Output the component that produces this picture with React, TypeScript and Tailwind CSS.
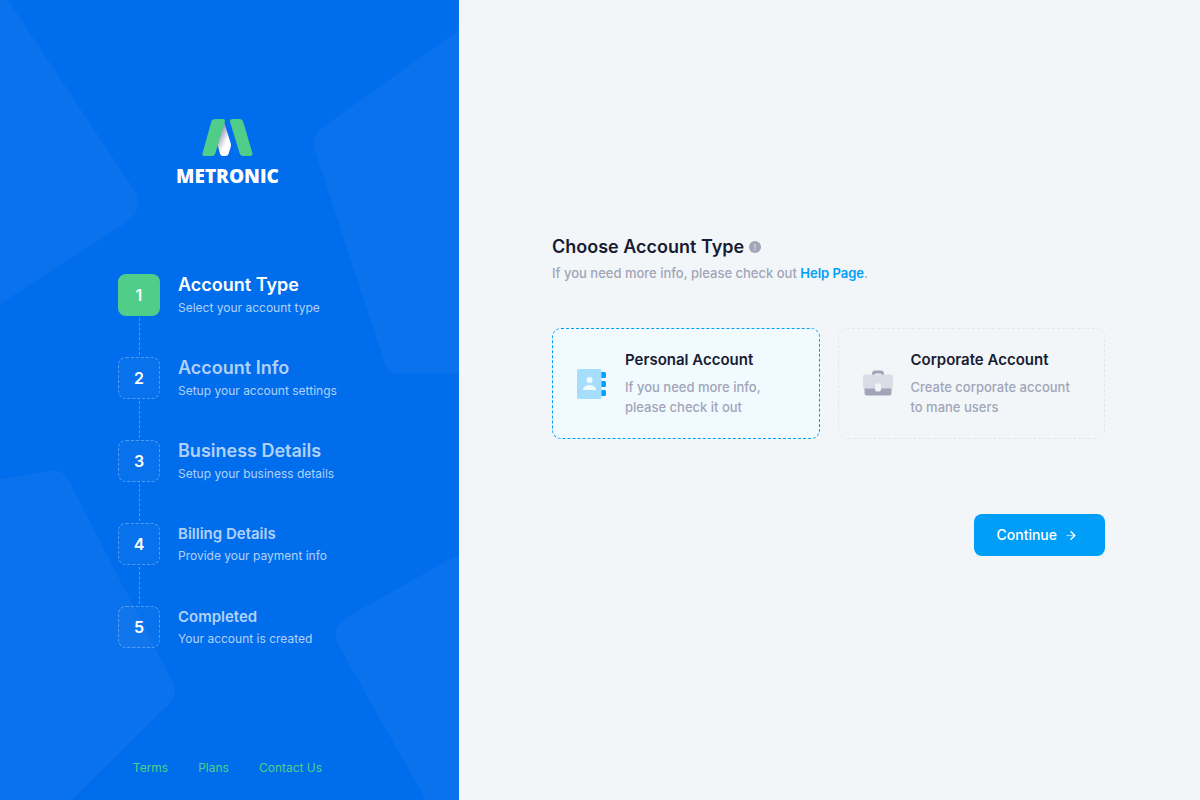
import { useState } from "react";

type Step = { title: string; text: string; large: boolean };

const steps: Step[] = [
  { title: "Account Type", text: "Select your account type", large: true },
  { title: "Account Info", text: "Setup your account settings", large: true },
  { title: "Business Details", text: "Setup your business details", large: true },
  { title: "Billing Details", text: "Provide your payment info", large: false },
  { title: "Completed", text: "Your account is created", large: false },
];

function Backdrop() {
  return (
    <svg
      className="absolute inset-0 h-full w-full"
      viewBox="0 0 459 800"
      preserveAspectRatio="xMidYMid slice"
      fill="#fff"
      fillOpacity="0.04"
      aria-hidden="true"
    >
      <path d="M0 0H8L131 185C141 200 141 212 127 222L0 304Z" />
      <path d="M459 30L323 127C314 134 312 143 315 151L384 361C387 370 391 374 400 374H459Z" />
      <path d="M0 479L50 471C58 469 64 472 69 481L172 681C177 690 175 698 168 705L72 800H0Z" />
      <path d="M459 554L349 616C336 623 333 634 339 646L426 800H459Z" />
    </svg>
  );
}

function Logo() {
  return (
    <a href="#" className="flex flex-col items-center gap-2">
      <svg width="51" height="37" viewBox="0 0 51 37" aria-hidden="true">
        <defs>
          <linearGradient id="fold" x1="16" y1="16" x2="26" y2="21" gradientUnits="userSpaceOnUse">
            <stop offset="0.1" stopColor="#a0a0b8" />
            <stop offset="0.95" stopColor="#fff" />
          </linearGradient>
        </defs>
        <path d="M22 3L28.8 24.5Q29.3 26.3 28.7 28L26.6 34.8Q25.900 37 23.600 37H20.800Q18.600 37 18 34.800L15.600 26Z" fill="url(#fold)" />
        <path d="M13.200 0H20.600Q23.600 0 22.800 3L13.400 34.200Q12.500 37 9.600 37H2.400Q-.3 37 .5 34.200L9.200 3Q10.100 0 13.200 0Z" fill="#50cd89" />
        <path d="M30.400 0H37.500Q40.400 0 41.300 3L50.400 34.200Q51.200 37 48.300 37H41.400Q38.500 37 37.600 34.200L28.100 3Q27.300 0 30.400 0Z" fill="#50cd89" />
      </svg>
      <span className="font-['Open_Sans',sans-serif] text-[19px] leading-6 font-extrabold text-white">METRONIC</span>
    </a>
  );
}

function AddressBookIcon() {
  return (
    <svg width="30" height="30" viewBox="0 0 30 30" aria-hidden="true">
      <path d="M24 3h3.500q1.500 0 1.500 1.500v3q0 1.500-1.500 1.500H24zM24 12h3.500q1.500 0 1.500 1.500v3q0 1.500-1.500 1.500H24zM24 21h3.500q1.500 0 1.500 1.500v3q0 1.500-1.500 1.500H24z" fill="#009ef7" />
      <rect width="24.500" height="30" rx="1.500" fill="#a6dcfc" />
      <circle cx="12.500" cy="11" r="3" fill="#f1faff" />
      <path d="M6 20.500C6.500 17.500 9 16 12.500 16s6 1.500 6.500 4.500q0 .5-.5.5h-12q-.5 0-.5-.5z" fill="#f1faff" />
    </svg>
  );
}

function BriefcaseIcon() {
  return (
    <svg width="30" height="30" viewBox="0 0 30 30" aria-hidden="true">
      <path d="M9 7V5q0-3.500 3-3.500h6q3 0 3 3.500v2h-3V5q0-.5-.5-.5h-5q-.5 0-.5.500V7z" fill="#a1a5b7" />
      <path d="M1.500 18h27v6q0 2.500-2.500 2.500H4q-2.500 0-2.500-2.500z" fill="#a1a5b7" />
      <path d="M1.500 5.500h27Q30 5.500 30 7V16.500q0 3-3 3H3q-3 0-3-3V7Q0 5.500 1.500 5.500z" fill="#dbdde6" />
      <rect x="12" y="14.500" width="6" height="8" rx="2" fill="#f1f4f8" />
    </svg>
  );
}

const accounts = [
  { id: "personal", title: "Personal Account", lines: ["If you need more info,", "please check it out"], icon: <AddressBookIcon /> },
  { id: "corporate", title: "Corporate Account", lines: ["Create corporate account", "to mane users"], icon: <BriefcaseIcon /> },
];

export default function App() {
  const [account, setAccount] = useState("personal");

  return (
    <div className="flex min-h-screen bg-[#f2f6f9] font-['Inter',sans-serif]">
      <aside className="relative flex w-[459px] shrink-0 flex-col overflow-hidden bg-[#006dec]">
        <Backdrop />
        <div className="relative flex grow flex-col items-center pt-[119px] pr-1 pb-[22px]">
          <Logo />
          <ol className="mt-[86px] flex w-[219px] flex-col">
            {steps.map((step, i) => (
              <li key={step.title} className="flex gap-[18px]">
                <div className="flex flex-col items-center">
                  <span
                    className={
                      i === 0
                        ? "flex size-[42px] items-center justify-center rounded-lg bg-[#50cd89] text-base font-semibold text-white"
                        : "flex size-[42px] items-center justify-center rounded-lg border border-dashed border-white/30 bg-white/3 text-base font-semibold text-white"
                    }
                  >
                    {i + 1}
                  </span>
                  {i < steps.length - 1 && <span className="my-[2px] h-[37px] border-l border-dashed border-white/30" />}
                </div>
                <div className="flex h-[42px] flex-col justify-center whitespace-nowrap">
                  <h3
                    className={
                      i === 0
                        ? "text-lg leading-[26px] font-semibold text-white"
                        : step.large
                          ? "text-lg leading-[26px] font-semibold text-white/70"
                          : "text-[15px] leading-6 font-semibold text-white/70"
                    }
                  >
                    {step.title}
                  </h3>
                  <p className="text-xs leading-5 text-white/70">{step.text}</p>
                </div>
              </li>
            ))}
          </ol>
          <nav className="mt-auto flex gap-[30px] text-xs leading-5 text-[#50cd89]">
            <a href="#">Terms</a>
            <a href="#">Plans</a>
            <a href="#">Contact Us</a>
          </nav>
        </div>
      </aside>

      <main className="flex grow items-center justify-center pr-[34px] pb-[11px] pl-8">
        <form className="w-full max-w-[553px]" onSubmit={(e) => e.preventDefault()}>
          <h1 className="flex items-center gap-[5px] text-lg leading-7 font-semibold text-[#181c32]">
            Choose Account Type
            <svg width="12" height="12" viewBox="0 0 12 12" aria-hidden="true">
              <circle cx="6" cy="6" r="6" fill="#a1a5b7" />
              <path d="M6 3v3.500M6 7.700v1.500" stroke="#f2f6f9" strokeOpacity="0.6" strokeWidth="1.600" />
            </svg>
          </h1>
          <p className="mt-[2px] text-[13px] leading-5 font-medium text-[#a1a5b7]">
            If you need more info, please check out{" "}
            <a href="#" className="font-semibold text-[#009ef7]">
              Help Page
            </a>
            .
          </p>
          <div className="mt-[45px] grid grid-cols-2 gap-[18px]">
            {accounts.map((item) => (
              <label
                key={item.id}
                htmlFor={item.id}
                className="flex cursor-pointer items-center gap-[18px] rounded-[9px] border border-dashed border-[#e4e6ef] px-6 py-[21px] has-checked:border-[#009ef7] has-checked:bg-[#f1faff]"
              >
                <input
                  id={item.id}
                  type="radio"
                  name="account"
                  className="sr-only"
                  checked={account === item.id}
                  onChange={() => setAccount(item.id)}
                />
                {item.icon}
                <span className="flex flex-col">
                  <span className="text-[15px] leading-5 font-semibold text-[#181c32]">{item.title}</span>
                  <span className="mt-[7px] text-[13px] leading-5 font-medium text-[#a1a5b7]">
                    {item.lines[0]}
                    <br />
                    {item.lines[1]}
                  </span>
                </span>
              </label>
            ))}
          </div>
          <div className="mt-[75px] flex justify-end">
            <button
              type="submit"
              className="flex h-[42px] items-center gap-[9px] rounded-lg bg-[#009ef7] pr-[29px] pl-[22px] text-sm font-medium text-white"
            >
              Continue
              <svg width="10" height="10" viewBox="0 0 10 10" fill="none" stroke="#fff" aria-hidden="true">
                <path d="M0.500 5.500H8" strokeOpacity="0.6" strokeWidth="1.200" />
                <path d="M5 1.700L8.800 5.500L5 9.300" strokeWidth="1.400" strokeLinecap="round" strokeLinejoin="round" />
              </svg>
            </button>
          </div>
        </form>
      </main>
    </div>
  );
}
